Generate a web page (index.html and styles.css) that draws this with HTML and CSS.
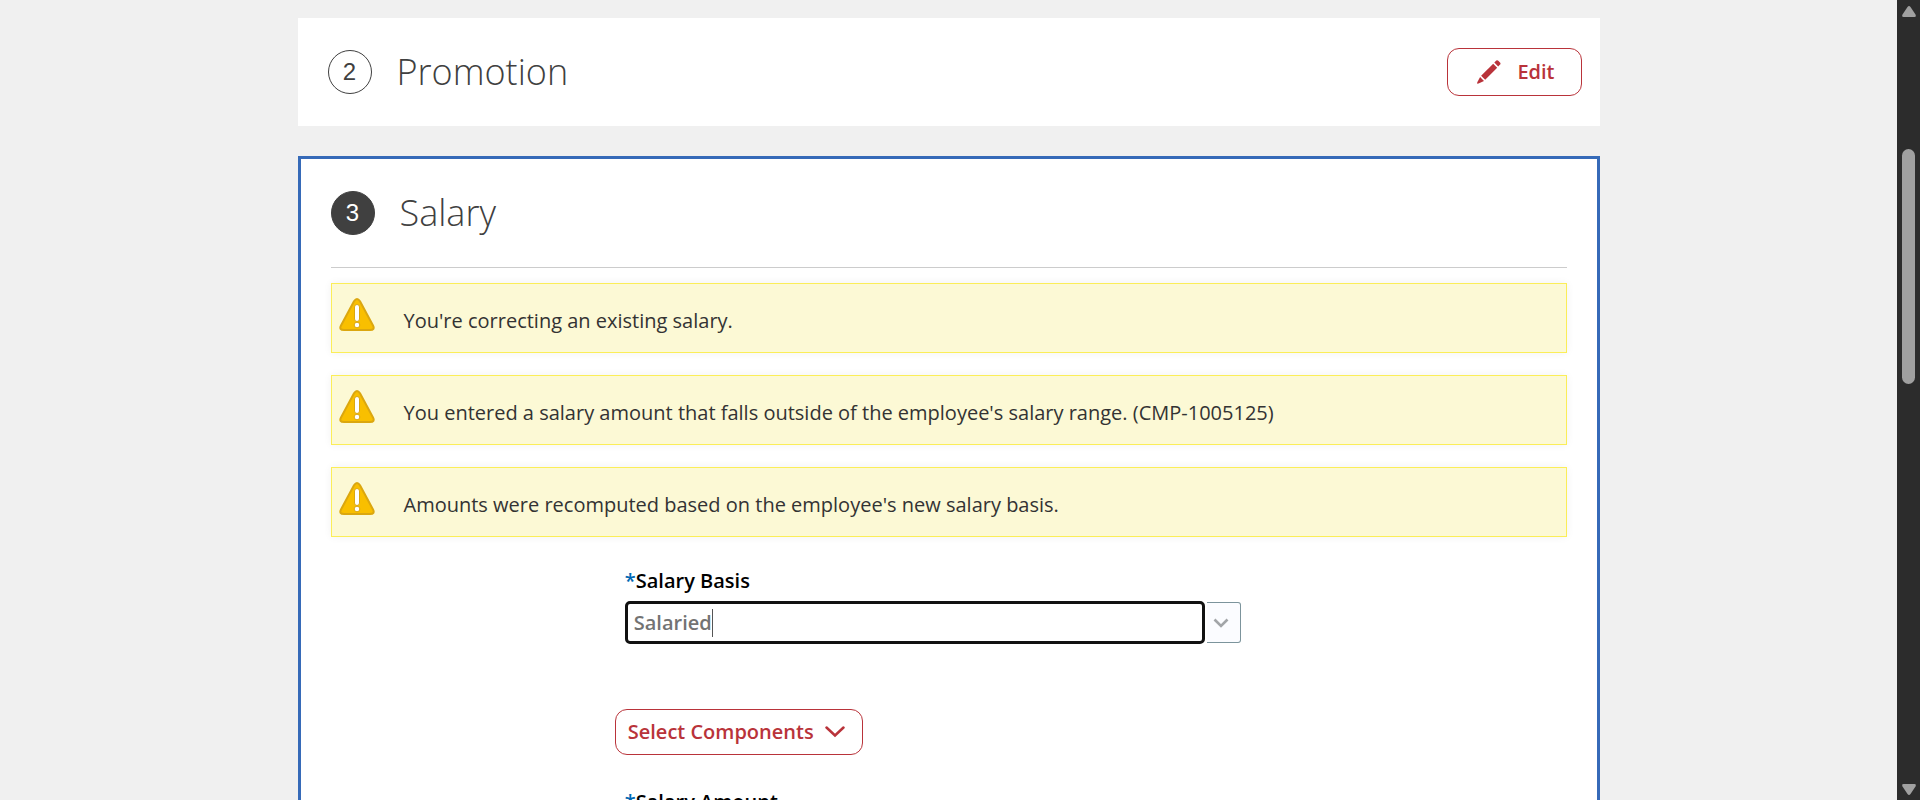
FILE: index.html
```html
<!DOCTYPE html>
<html lang="en">
<head>
<meta charset="utf-8">
<title>Salary</title>
<link rel="stylesheet" href="styles.css">
</head>
<body>
<svg class="sprite" aria-hidden="true">
  <symbol id="warning" viewBox="0 0 36 34">
    <path d="M15 3.2Q18-1.2 21 3.2L34 27.5Q36.300 32 31 32H5Q-.3 32 2 27.500Z" fill="#f9bf00" stroke="#dba70f" stroke-width="2"/>
    <rect x="15.500" y="6.500" width="5" height="17" rx="2.500" fill="#fff" stroke="#dba70f"/>
    <circle cx="18" cy="27" r="2.800" fill="#fff" stroke="#dba70f"/>
  </symbol>
</svg>
<main class="page">
  <div class="steps">
    <section class="card">
      <header class="card-header">
        <span class="badge">2</span>
        <h2 class="title">Promotion</h2>
        <button class="btn btn-edit" type="button">
          <svg class="pencil" viewBox="0 0 24 24" aria-hidden="true"><g fill="#b9333a"><path d="M17.300 2.600 19.300.6Q20.300-.2 21.300.8L23 2.600Q24 3.600 23.100 4.600L21.200 6.500Z"/><path d="M16.200 3.700 20.200 7.800 8.200 19.800 4.100 15.700Z"/><path d="M3.100 17 7 20.900 1.500 23.400.2 23.700Q0 23 .3 22.200Z"/></g></svg>
          Edit
        </button>
      </header>
    </section>
    <section class="card card-active">
      <header class="card-header card-header-active">
        <span class="badge badge-active">3</span>
        <h2 class="title">Salary</h2>
      </header>
      <div class="alerts">
        <div class="alert"><svg class="alert-icon" aria-hidden="true"><use href="#warning"/></svg><p class="alert-text">You're correcting an existing salary.</p></div>
        <div class="alert"><svg class="alert-icon" aria-hidden="true"><use href="#warning"/></svg><p class="alert-text">You entered a salary amount that falls outside of the employee's salary range. (CMP-1005125)</p></div>
        <div class="alert"><svg class="alert-icon" aria-hidden="true"><use href="#warning"/></svg><p class="alert-text">Amounts were recomputed based on the employee's new salary basis.</p></div>
      </div>
      <form class="form">
        <div class="field">
          <label class="label" for="basis"><span class="required">*</span>Salary Basis</label>
          <div class="combo">
            <div class="combo-box"><input class="combo-input" id="basis" type="text" value="Salaried"><span class="caret"></span></div>
            <button class="combo-toggle" type="button" aria-label="Show salary basis options"><svg class="combo-chevron" viewBox="0 0 16 10" aria-hidden="true"><path d="M1.500 1.500 8 8 14.500 1.500" fill="none" stroke="#a2a5a8" stroke-width="2.600"/></svg></button>
          </div>
        </div>
        <button class="btn btn-select" type="button">Select Components
          <svg class="select-chevron" viewBox="0 0 20 12" aria-hidden="true"><path d="M1.500 1.500 10 9.500 18.500 1.500" fill="none" stroke="#b9333a" stroke-width="2.500" stroke-linecap="round"/></svg>
        </button>
        <div class="field">
          <label class="label" for="amount"><span class="required">*</span>Salary Amount</label>
          <div class="combo"><div class="combo-box"><input class="combo-input" id="amount" type="text"></div></div>
        </div>
      </form>
    </section>
  </div>
</main>
<aside class="scrollbar" aria-hidden="true">
  <svg class="arrow" viewBox="0 0 14 11"><path d="M5.500 1Q7-.8 8.500 1L13.500 8.500Q14.500 11 12.500 11H1.500Q-.5 11 .5 8.500Z" fill="#a0a0a0"/></svg>
  <div class="track"><div class="thumb"></div></div>
  <svg class="arrow" viewBox="0 0 14 11"><path d="M5.500 10Q7 11.800 8.500 10L13.500 2.500Q14.500 0 12.500 0H1.500Q-.5 0 .5 2.500Z" fill="#a0a0a0"/></svg>
</aside>
</body>
</html>
```
FILE: styles.css
```css
* { box-sizing: border-box; }

body {
  display: flex;
  height: 100vh;
  margin: 0;
  overflow: hidden;
  background: #f0f0f0;
  color: #333;
  font: 20px/28px "Open Sans", "Noto Sans", sans-serif;
}

.sprite { position: absolute; width: 0; height: 0; }

.page { flex: 1; overflow: hidden; padding: 18px 24px 0; }

.steps {
  display: flex;
  flex-direction: column;
  gap: 30px;
  max-width: 1302px;
  margin: 0 auto;
}

.card { background: #fff; padding: 0 18px 0 30px; }
.card-active { border: 3px solid #366ab8; padding: 0 30px; }

.card-header { display: flex; align-items: center; gap: 25px; height: 108px; }
.card-header-active { border-bottom: 1px solid #ccc; height: 109px; }

.badge {
  display: flex;
  align-items: center;
  justify-content: center;
  width: 44px;
  height: 44px;
  border: 1px solid #404040;
  border-radius: 50%;
  color: #404040;
  font: 24px/28px "Liberation Sans", Arial, sans-serif;
}
.badge-active { background: #404040; color: #fff; }

.title { flex: 1; margin: 0; color: #404040; font-size: 36px; line-height: 48px; font-weight: 300; }

.btn {
  display: flex;
  align-items: center;
  border: 1px solid #b9333a;
  border-radius: 12px;
  background: #fff;
  color: #b9333a;
  font: 600 20px/28px "Open Sans", "Noto Sans", sans-serif;
}
.btn-edit { gap: 16px; height: 48px; padding: 0 26px 0 29px; }
.pencil { width: 24px; height: 24px; }

.alerts { display: flex; flex-direction: column; gap: 22px; padding-top: 15px; }

.alert {
  display: flex;
  align-items: flex-start;
  gap: 29px;
  min-height: 70px;
  padding: 14px 8px 0 7px;
  border: 1px solid #fbee58;
  background: #fcf9d5;
  box-shadow: 0 0 8px rgba(0, 0, 0, 0.06);
}
.alert-icon { flex: none; width: 36px; height: 34px; }
.alert-text { margin: 9px 0 0; }

.form {
  display: flex;
  flex-direction: column;
  align-items: flex-start;
  width: 51%;
  max-width: 626px;
  margin-left: 23%;
  padding-top: 30px;
}

.field { width: 100%; padding-left: 10px; }
.label { display: flex; margin-bottom: 6px; color: #000; font-weight: 600; }
.required { color: #0067b3; }

.combo { display: flex; align-items: center; gap: 2px; }
.combo-box {
  display: flex;
  flex: 1;
  align-items: center;
  height: 43px;
  padding-left: 6px;
  border: 3px solid #111;
  border-radius: 5px;
}
.combo-input {
  field-sizing: content;
  padding: 0;
  border: 0;
  outline: 0;
  background: none;
  color: #737373;
  font: 600 20px/28px "Open Sans", "Noto Sans", sans-serif;
}
.caret { width: 1px; height: 28px; background: #555; }

.combo-toggle {
  display: flex;
  align-items: center;
  justify-content: center;
  width: 34px;
  height: 41px;
  padding: 0 4px 0 0;
  border: 1px solid #7c949c;
  border-left: 0;
  border-radius: 0 3px 3px 0;
  background: #fbfcff;
}
.combo-chevron { width: 16px; height: 10px; }

.btn-select { gap: 11px; height: 46px; margin: 65px 0 33px; padding: 0 17px 0 12px; }
.select-chevron { width: 20px; height: 12px; }

.scrollbar {
  display: flex;
  flex: none;
  flex-direction: column;
  align-items: center;
  width: 23px;
  padding: 6px 0 5px;
  background: #2c2c2c;
}
.arrow { width: 14px; height: 11px; }
.track { flex: 1; width: 13px; padding-top: 132px; }
.thumb { height: 37%; border-radius: 7px; background: #a0a0a0; }
```
